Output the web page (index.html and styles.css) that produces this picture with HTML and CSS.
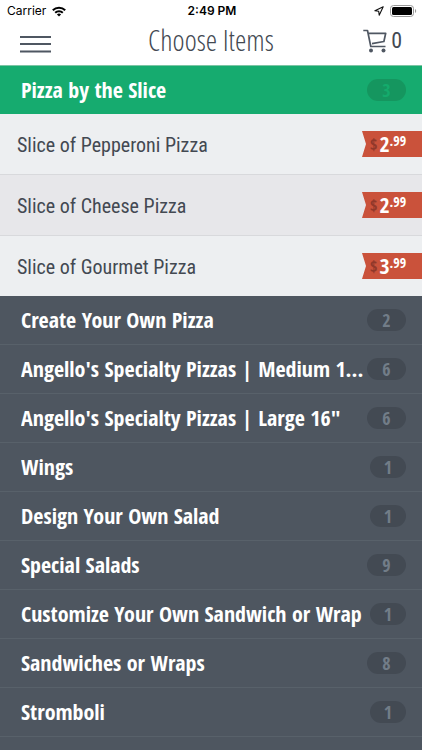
FILE: index.html
```html
<!DOCTYPE html>
<html lang="en">
<head>
<meta charset="utf-8">
<meta name="viewport" content="width=device-width, initial-scale=1">
<title>Choose Items</title>
<link rel="stylesheet" href="styles.css">
</head>
<body>
<div class="status">
  <div class="carrier"><span>Carrier</span>
    <svg width="14" height="11" viewBox="0 0 14 11" fill="none" stroke="#000" stroke-width="2"><path d="M.8 4.2a8.8 8.8 0 0 1 12.4 0M3.2 6.7a5.4 5.4 0 0 1 7.6 0"/><path d="M7 10.6 4.9 8.5a3 3 0 0 1 4.2 0z" fill="#000" stroke="none"/></svg>
  </div>
  <div class="time">2:49 PM</div>
  <div class="power">
    <svg width="10" height="10" viewBox="0 0 10 10" fill="none" stroke="#111" stroke-width="1.1" stroke-linejoin="round"><path d="M9.2.8.9 4.7l3.8.6.5 3.9z"/></svg>
    <svg width="27" height="12" viewBox="0 0 27 12"><rect x=".5" y=".5" width="23" height="11" rx="3" fill="#fff" stroke="#999"/><rect x="2" y="2" width="20" height="8" rx="1.5"/><path d="M25 4v4c1.600-.6 1.600-3.400 0-4z" fill="#999"/></svg>
  </div>
</div>
<header class="bar">
  <button class="menu" type="button" aria-label="Menu"><svg width="31" height="18" viewBox="0 0 31 18" stroke="#4f5762" stroke-width="2"><path d="M0 2h31M0 9h31M0 16.500h31"/></svg></button>
  <h1>Choose Items</h1>
  <button class="cart" type="button" aria-label="Cart, 0 items"><svg width="25" height="24" viewBox="0 0 25 24" fill="none" stroke="#4f5762" stroke-width="1.700" stroke-linejoin="round"><path d="M.3 1.500h4.200L7.800 17.500h14.700M5.200 4.300h17.500l-1.800 8.200L9 14.600"/><circle cx="8" cy="21.500" r="2" fill="#4f5762" stroke="none"/><circle cx="20.500" cy="21.500" r="2" fill="#4f5762" stroke="none"/></svg><span>0</span></button>
</header>
<main>
  <button class="category open" type="button"><span class="name">Pizza by the Slice</span><span class="count">3</span></button>
  <ul class="items">
    <li><a href="#pepperoni">Slice of Pepperoni Pizza</a><span class="price"><i>$</i><b>2</b><sup>.99</sup></span></li>
    <li><a href="#cheese">Slice of Cheese Pizza</a><span class="price"><i>$</i><b>2</b><sup>.99</sup></span></li>
    <li><a href="#gourmet">Slice of Gourmet Pizza</a><span class="price"><i>$</i><b>3</b><sup>.99</sup></span></li>
  </ul>
  <div class="categories">
    <button class="category" type="button"><span class="name">Create Your Own Pizza</span><span class="count">2</span></button>
    <button class="category" type="button"><span class="name">Angello's Specialty Pizzas | Medium 1...</span><span class="count">6</span></button>
    <button class="category" type="button"><span class="name">Angello's Specialty Pizzas | Large 16″</span><span class="count">6</span></button>
    <button class="category" type="button"><span class="name">Wings</span><span class="count narrow">1</span></button>
    <button class="category" type="button"><span class="name">Design Your Own Salad</span><span class="count narrow">1</span></button>
    <button class="category" type="button"><span class="name">Special Salads</span><span class="count">9</span></button>
    <button class="category" type="button"><span class="name">Customize Your Own Sandwich or Wrap</span><span class="count narrow">1</span></button>
    <button class="category" type="button"><span class="name">Sandwiches or Wraps</span><span class="count">8</span></button>
    <button class="category" type="button"><span class="name">Stromboli</span><span class="count narrow">1</span></button>
    <div class="rest"></div>
  </div>
</main>
</body>
</html>
```
FILE: styles.css
```css
* { box-sizing: border-box; }
body {
  margin: 0;
  min-height: 100vh;
  display: flex;
  flex-direction: column;
  background: #fff;
  color: #434952;
  font-family: "Roboto Condensed", "Liberation Sans Narrow", "Open Sans", sans-serif;
}
button {
  border: 0;
  padding: 0;
  background: none;
  color: inherit;
  font: inherit;
}
.status {
  display: grid;
  grid-template-columns: 1fr auto 1fr;
  align-items: center;
  height: 22px;
  padding: 0 5px 0 7px;
  color: #000;
  font: 12px/22px Inter, sans-serif;
}
.carrier, .power { display: flex; align-items: center; gap: 6px; }
.power { justify-content: flex-end; }
.time { font-weight: 600; }
.bar {
  display: grid;
  grid-template-columns: 1fr auto 1fr;
  align-items: center;
  height: 43px;
  padding: 0 20px 6px;
}
.menu { display: flex; justify-self: start; padding-top: 6px; }
h1 {
  margin: 0;
  padding-bottom: 2px;
  font-family: "Open Sans Condensed Light", "Roboto Condensed", sans-serif;
  font-size: 29px;
  line-height: 36px;
  font-weight: 400;
}
.cart {
  display: flex;
  justify-self: end;
  align-items: center;
  gap: 3px;
  font-size: 22px;
  line-height: 28px;
}
main { flex: 1; display: flex; flex-direction: column; }
.category {
  display: flex;
  align-items: center;
  width: 100%;
  height: 49px;
  padding: 0 16px 0 21px;
  border-top: 1px solid #58616a;
  color: #fff;
  font-family: "Open Sans Condensed", "Open Sans", sans-serif;
  font-size: 22px;
  line-height: 28px;
  font-weight: 700;
  text-align: left;
}
.name {
  flex: 1;
  min-width: 0;
  padding-bottom: 2px;
  overflow: hidden;
  text-overflow: ellipsis;
  white-space: nowrap;
}
.count {
  width: 39px;
  border-radius: 11px;
  background: #434a53;
  color: #727d88;
  font-size: 18px;
  line-height: 22px;
  text-align: center;
}
.narrow { width: 36px; }
.open { background: #16ab6f; border-color: #7cc4a4; }
.open .count { background: #15965f; color: #14ab6c; }
.items { margin: 0; padding: 0; list-style: none; background: #edeff1; }
.items li {
  display: flex;
  align-items: center;
  justify-content: space-between;
  height: 61px;
  padding-left: 17px;
  border-bottom: 1px solid #d8d9dc;
}
.items li:nth-child(2) { background: #e7e7ea; }
.items li:last-child { height: 60px; border-bottom: 0; }
.items a { padding-top: 2px; color: inherit; font-size: 20px; line-height: 28px; text-decoration: none; }
.price {
  display: flex;
  width: 60px;
  height: 26px;
  padding-left: 8px;
  background: #ca523b;
  clip-path: polygon(0 0, 100% 0, 100% 100%, 0 100%, 4px 50%);
  color: #fff;
  font-family: "Open Sans Condensed", "Open Sans", sans-serif;
  line-height: 26px;
}
.price i { color: #91382a; font-size: 16px; font-style: normal; font-weight: 700; }
.price b { margin-left: 2px; font-size: 22px; line-height: 24px; }
.price sup { font-size: 14px; line-height: 20px; font-weight: 700; }
.categories { flex: 1; display: flex; flex-direction: column; background: #4e5660; }
.categories .category:first-child { height: 48px; border-top: 0; }
.rest { flex: 1; border-top: 1px solid #58616a; }
```
